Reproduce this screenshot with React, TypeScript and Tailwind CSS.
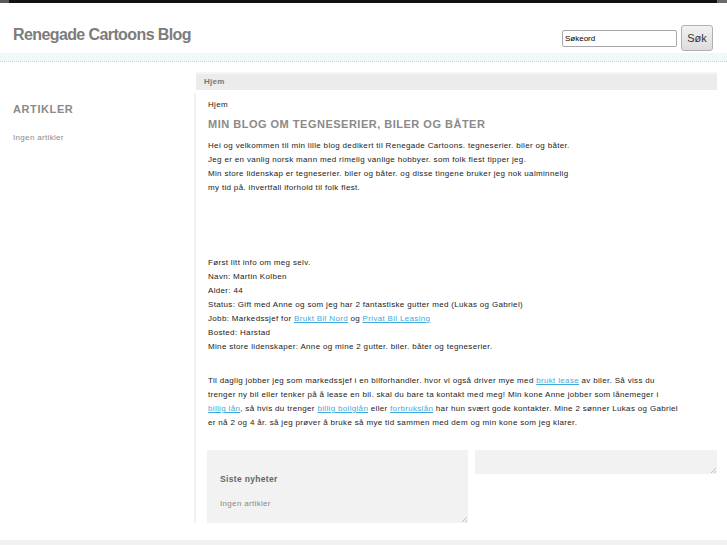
import React from "react";

function Grip() {
  return (
    <svg className="absolute bottom-[1px] right-[1px]" width="6" height="6" viewBox="0 0 6 6">
      <path d="M6 1 L1 6 M6 4 L4 6" stroke="#b5b5b5" strokeWidth="0.8" />
    </svg>
  );
}

function A({ children }: { children: React.ReactNode }) {
  return <a className="text-[#3fa9dc] underline">{children}</a>;
}

export default function App() {
  return (
    <div className="w-[727px] h-[545px] overflow-hidden bg-white font-['Liberation_Sans',Arial,sans-serif] text-[#222]">
      {/* top strip */}
      <div className="flex h-[3px]">
        <div className="w-[9px] bg-[#5a5a5a]" />
        <div className="flex-1 bg-[#111]" />
        <div className="w-[10px] bg-[#6a6a6a]" />
      </div>

      {/* header */}
      <div className="flex h-[50px] justify-between pl-[13px] pr-[14px]">
        <div className="mt-[20px] text-[16px] font-bold tracking-[-0.6px] text-[#7c7c7c]">
          Renegade Cartoons Blog
        </div>
        <div className="mt-[22px] flex items-center gap-[4px] self-start">
          <div className="mt-[1px] flex h-[17px] w-[115px] items-center rounded-[2px] border border-[#a8a8a8] px-[2px] text-[8px] text-black">
            Søkeord
          </div>
          <div className="flex h-[26px] w-[32px] items-center justify-center rounded-[3px] border border-[#b0b0b0] bg-gradient-to-b from-[#f2f2f2] to-[#dcdcdc] text-[11px] text-[#333]">
            Søk
          </div>
        </div>
      </div>
      <div className="h-[8px] bg-[#f1f8fa]" />
      <div className="border-t border-dotted border-[#cfcfcf]" />

      {/* main */}
      <div className="mt-[10px] flex">
        <div className="w-[195px] pl-[13px] pt-[29px]">
          <div className="text-[11px] font-bold tracking-[0.6px] text-[#8a8a8a]">ARTIKLER</div>
          <div className="mt-[14px] text-[8px] tracking-[0.33px] text-[#8a8a8a]">Ingen artikler</div>
        </div>
        <div className="mr-[10px] flex-1">
          <div className="ml-[2px] flex h-[18px] items-center border-t-[2px] border-[#f3f7f8] bg-[#ececec] pl-[8px] text-[8px] font-bold tracking-[0.3px] text-[#777]">
            Hjem
          </div>
          <div className="mt-[3px] border-l-[2px] border-[#f0f0f0] pl-[12px] pt-[5px] text-[8px] leading-[14px] tracking-[0.33px]">
            <div>Hjem</div>
            <div className="mt-[5px] text-[11px] font-bold tracking-[0.5px] text-[#8a8a8a]">
              MIN BLOG OM TEGNESERIER, BILER OG BÅTER
            </div>
            <p className="mt-[8px]">
              Hei og velkommen til min lille blog dedikert til Renegade Cartoons. tegneserier. biler og båter.
              <br />
              Jeg er en vanlig norsk mann med rimelig vanlige hobbyer. som folk flest tipper jeg.
              <br />
              Min store lidenskap er tegneserier. biler og båter. og disse tingene bruker jeg nok ualminnelig
              <br />
              my tid på. ihvertfall iforhold til folk flest.
            </p>
            <p className="mt-[61px]">
              Først litt info om meg selv.
              <br />
              Navn: Martin Kolben
              <br />
              Alder: 44
              <br />
              Status: Gift med Anne og som jeg har 2 fantastiske gutter med (Lukas og Gabriel)
              <br />
              Jobb: Markedssjef for <A>Brukt Bil Nord</A> og <A>Privat Bil Leasing</A>
              <br />
              Bosted: Harstad
              <br />
              Mine store lidenskaper: Anne og mine 2 gutter. biler. båter og tegneserier.
            </p>
            <p className="mt-[20px] whitespace-nowrap">
              Til daglig jobber jeg som markedssjef i en bilforhandler. hvor vi også driver mye med{" "}
              <A>brukt lease</A> av biler. Så viss du
              <br />
              trenger ny bil eller tenker på å lease en bil. skal du bare ta kontakt med meg! Min kone Anne
              jobber som lånemeger i
              <br />
              <A>billig lån</A>, så hvis du trenger <A>billig boliglån</A> eller <A>forbrukslån</A> har hun
              svært gode kontakter. Mine 2 sønner Lukas og Gabriel
              <br />
              er nå 2 og 4 år. så jeg prøver å bruke så mye tid sammen med dem og min kone som jeg klarer.
            </p>
            <div className="mt-[20px] flex gap-[7px]">
              <div className="relative -ml-[1px] h-[73px] w-[261px] bg-[#f2f2f2] pl-[13px] pt-[22px]">
                <div className="text-[8.5px] font-bold text-[#666]">Siste nyheter</div>
                <div className="mt-[11px] text-[8px] text-[#888]">Ingen artikler</div>
                <Grip />
              </div>
              <div className="relative h-[24px] w-[242px] bg-[#f2f2f2]">
                <Grip />
              </div>
            </div>
          </div>
        </div>
      </div>
      <div className="mt-[17px] h-[10px] bg-[#f2f2f2]" />
    </div>
  );
}
